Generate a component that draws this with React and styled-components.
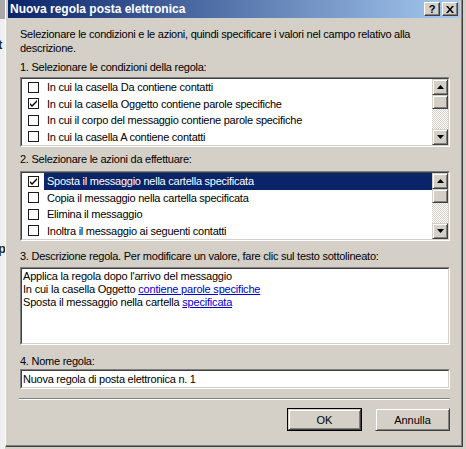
import styled, { createGlobalStyle } from "styled-components";

const GlobalStyle = createGlobalStyle`
  html, body {
    margin: 0;
    padding: 0;
  }
  body {
    background: #d4d0c8;
    font-family: "Liberation Sans", Arial, sans-serif;
    font-size: 11px;
    color: #000;
  }
`;

const conditions = [
  { text: "In cui la casella Da contiene contatti", checked: false },
  { text: "In cui la casella Oggetto contiene parole specifiche", checked: true },
  { text: "In cui il corpo del messaggio contiene parole specifiche", checked: false },
  { text: "In cui la casella A contiene contatti", checked: false },
];

const actions = [
  { text: "Sposta il messaggio nella cartella specificata", checked: true, selected: true },
  { text: "Copia il messaggio nella cartella specificata", checked: false },
  { text: "Elimina il messaggio", checked: false },
  { text: "Inoltra il messaggio ai seguenti contatti", checked: false },
];

const CheckMark = () => (
  <svg width="7" height="7" viewBox="0 0 7 7">
    <path d="M0 3 L2 5 L7 0 L7 2 L2 7 L0 5 Z" fill="#000" />
  </svg>
);

const Arrow = ({ down }) => (
  <svg width="7" height="4" viewBox="0 0 7 4">
    {down
      ? <polygon points="0,0 7,0 3.5,4" fill="#000" />
      : <polygon points="0,4 7,4 3.5,0" fill="#000" />}
  </svg>
);

const CheckList = ({ items, height }) => (
  <Frame $h={height}>
    <Inner>
      <Rows>
        {items.map((item, i) => (
          <Row key={i}>
            <Check>{item.checked && <CheckMark />}</Check>
            <RowLabel $selected={item.selected}>{item.text}</RowLabel>
          </Row>
        ))}
      </Rows>
      <ScrollBar>
        <ScrollButton><Arrow /></ScrollButton>
        <Thumb />
        <Track />
        <ScrollButton><Arrow down /></ScrollButton>
      </ScrollBar>
    </Inner>
  </Frame>
);

const App = () => {
  return (
    <Desktop>
      <GlobalStyle />
      <BehindStrip>
        <Fragment $top={38}>t</Fragment>
        <Fragment $top={190}>p</Fragment>
      </BehindStrip>
      <Window>
        <TitleBar>
          <TitleText>Nuova regola posta elettronica</TitleText>
          <CaptionButton><HelpGlyph>?</HelpGlyph></CaptionButton>
          <CaptionButton $gap={2}>
            <svg width="8" height="7" viewBox="0 0 8 7">
              <path d="M0 0 L2 0 L4 2.5 L6 0 L8 0 L5 3.5 L8 7 L6 7 L4 4.5 L2 7 L0 7 L3 3.5 Z" fill="#000" />
            </svg>
          </CaptionButton>
        </TitleBar>
        <Content>
          <Intro>
            Selezionare le condizioni e le azioni, quindi specificare i valori nel campo relativo alla descrizione.
          </Intro>
          <Label $top={5} $bottom={3}>1. Selezionare le condizioni della regola:</Label>
          <CheckList items={conditions} height={70} />
          <Label $top={5} $bottom={5}>2. Selezionare le azioni da effettuare:</Label>
          <CheckList items={actions} height={70} />
          <Label $top={8} $bottom={4}>3. Descrizione regola. Per modificare un valore, fare clic sul testo sottolineato:</Label>
          <Frame $h={78}>
            <Description>
              <div>Applica la regola dopo l'arrivo del messaggio</div>
              <div>In cui la casella Oggetto <Link>contiene parole specifiche</Link></div>
              <div>Sposta il messaggio nella cartella <Link>specificata</Link></div>
            </Description>
          </Frame>
          <Label $top={9} $bottom={1}>4. Nome regola:</Label>
          <Frame $h={20}>
            <TextField>Nuova regola di posta elettronica n. 1</TextField>
          </Frame>
          <Separator />
          <ButtonRow>
            <DefaultFrame>
              <Button>OK</Button>
            </DefaultFrame>
            <Button>Annulla</Button>
          </ButtonRow>
        </Content>
      </Window>
    </Desktop>
  );
};

export default App;

const Desktop = styled.div`
  display: flex;
  width: 466px;
  height: 449px;
  overflow: hidden;
  background: #d4d0c8;
`;

const BehindStrip = styled.div`
  width: 5px;
  flex: none;
  overflow: hidden;
  background: linear-gradient(#a9a9a9 0 19px, #efefef 19px);
  font-weight: bold;
  font-size: 13px;
  color: #202020;
`;

const Fragment = styled.div`
  margin-top: ${(p) => p.$top}px;
  line-height: 14px;
  text-indent: -2px;
  white-space: nowrap;
`;

const Window = styled.div`
  width: 458px;
  height: 447px;
  flex: none;
  box-sizing: border-box;
  background: #d4d0c8;
  border-left: 1px solid #fff;
  border-right: 1px solid #404040;
  border-bottom: 1px solid #404040;
  box-shadow: inset -1px -1px 0 #808080;
  padding: 0 2px 2px 2px;
  display: flex;
  flex-direction: column;
`;

const TitleBar = styled.div`
  height: 18px;
  flex: none;
  display: flex;
  align-items: center;
  padding: 0 2px 0 2px;
  background: linear-gradient(to right, #0a246a, #a6caf0);
  color: #fff;
  font-weight: bold;
  font-size: 12px;
`;

const TitleText = styled.span`
  flex: 1;
  white-space: nowrap;
`;

const CaptionButton = styled.div`
  width: 16px;
  height: 14px;
  box-sizing: border-box;
  margin-left: ${(p) => p.$gap || 0}px;
  background: #d4d0c8;
  border-top: 1px solid #fff;
  border-left: 1px solid #fff;
  border-right: 1px solid #404040;
  border-bottom: 1px solid #404040;
  box-shadow: inset -1px -1px 0 #808080;
  display: flex;
  align-items: center;
  justify-content: center;
`;

const HelpGlyph = styled.span`
  color: #000;
  font-size: 11px;
  font-weight: bold;
  line-height: 11px;
`;

const Content = styled.div`
  flex: 1;
  display: flex;
  flex-direction: column;
  padding: 9px 10px 0 12px;
  letter-spacing: -0.25px;
`;

const Intro = styled.p`
  margin: 0;
  line-height: 14px;
  padding-right: 20px;
`;

const Label = styled.div`
  line-height: 14px;
  margin-top: ${(p) => p.$top}px;
  margin-bottom: ${(p) => p.$bottom}px;
  white-space: nowrap;
`;

const Frame = styled.div`
  height: ${(p) => p.$h}px;
  flex: none;
  box-sizing: border-box;
  border: 1px solid;
  border-color: #808080 #fff #fff #808080;
`;

const Inner = styled.div`
  height: 100%;
  box-sizing: border-box;
  border: 1px solid;
  border-color: #404040 #d4d0c8 #d4d0c8 #404040;
  background: #fff;
  display: flex;
  overflow: hidden;
`;

const Rows = styled.div`
  flex: 1;
  display: flex;
  flex-direction: column;
`;

const Row = styled.div`
  height: 16.5px;
  flex: none;
  display: flex;
  align-items: center;
  padding-left: 6px;
`;

const Check = styled.span`
  width: 11px;
  height: 11px;
  flex: none;
  box-sizing: border-box;
  border: 1px solid #1a1a1a;
  background: #fff;
  display: flex;
  align-items: center;
  justify-content: center;
`;

const RowLabel = styled.span`
  flex: 1;
  margin-left: 5px;
  padding-left: 3px;
  height: 100%;
  display: flex;
  align-items: center;
  white-space: nowrap;
  background: ${(p) => (p.$selected ? "#0a246a" : "transparent")};
  color: ${(p) => (p.$selected ? "#fff" : "#000")};
`;

const raised = `
  box-sizing: border-box;
  background: #d4d0c8;
  border-top: 1px solid #d4d0c8;
  border-left: 1px solid #d4d0c8;
  border-right: 1px solid #404040;
  border-bottom: 1px solid #404040;
  box-shadow: inset 1px 1px 0 #fff, inset -1px -1px 0 #808080;
`;

const ScrollBar = styled.div`
  width: 16px;
  flex: none;
  display: flex;
  flex-direction: column;
`;

const ScrollButton = styled.div`
  ${raised}
  height: 16px;
  flex: none;
  display: flex;
  align-items: center;
  justify-content: center;
`;

const Thumb = styled.div`
  ${raised}
  height: 14px;
  flex: none;
`;

const Track = styled.div`
  flex: 1;
  background-color: #fff;
  background-image: conic-gradient(#d4d0c8 25%, #fff 0 50%, #d4d0c8 0 75%, #fff 0);
  background-size: 2px 2px;
`;

const Description = styled.div`
  height: 100%;
  box-sizing: border-box;
  border: 1px solid;
  border-color: #404040 #d4d0c8 #d4d0c8 #404040;
  background: #fff;
  padding: 1px 1px;
  line-height: 13px;
  letter-spacing: -0.2px;
`;

const Link = styled.span`
  color: #0000cc;
  text-decoration: underline;
`;

const TextField = styled.div`
  height: 100%;
  box-sizing: border-box;
  border: 1px solid;
  border-color: #404040 #d4d0c8 #d4d0c8 #404040;
  background: #fff;
  padding: 0 1px;
  line-height: 16px;
`;

const Separator = styled.div`
  height: 0;
  margin-top: 9px;
  margin-left: -1px;
  border-top: 1px solid #808080;
  border-bottom: 1px solid #fff;
`;

const ButtonRow = styled.div`
  display: flex;
  justify-content: flex-end;
  align-items: center;
  gap: 13px;
  margin-top: 8px;
`;

const DefaultFrame = styled.div`
  border: 1px solid #000;
  display: flex;
`;

const Button = styled.div`
  ${raised}
  width: 75px;
  height: 23px;
  display: flex;
  align-items: center;
  justify-content: center;
  letter-spacing: 0;
  ${DefaultFrame} & {
    width: 73px;
    height: 21px;
  }
`;
